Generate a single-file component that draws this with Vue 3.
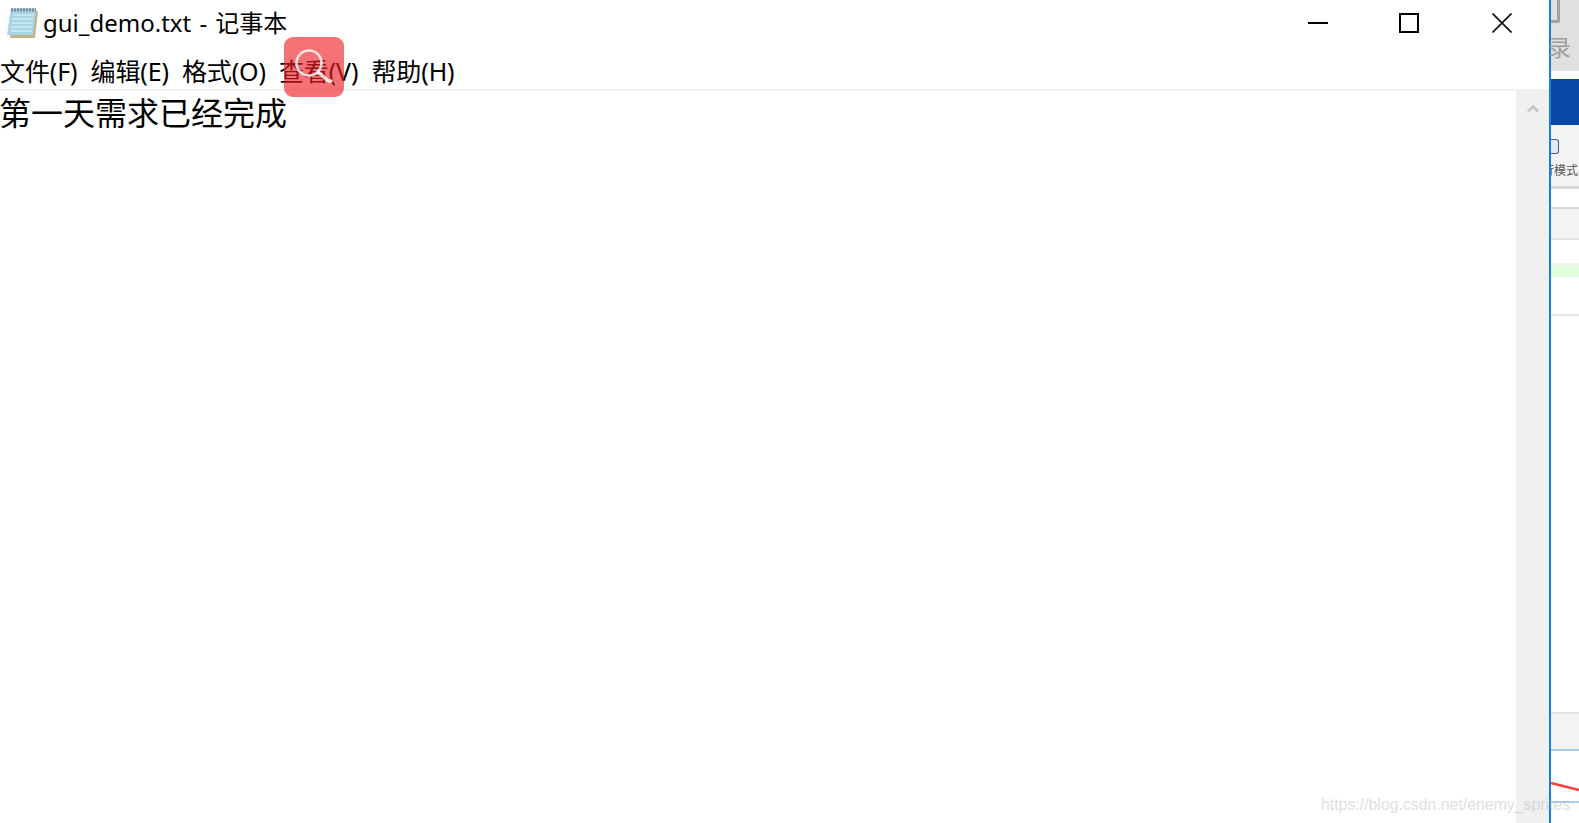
<script setup>
const menus = ['文件(F)', '编辑(E)', '格式(O)', '查看(V)', '帮助(H)'];
</script>

<template>
  <div class="screen">
    <div class="notepad">
      <div class="titlebar">
        <svg class="app-icon" viewBox="0 0 34 34" width="34" height="34">
          <path d="M8 5h24l-3 27H4z" fill="#c4b28a" />
          <path d="M5 2h25l-3 27H1z" fill="#a6d4e4" />
          <path d="M7 9h21M6 13h21M6 17h21M5 21h21M5 25h21" stroke="#cfeaf2" stroke-width="1.6" />
          <path d="M5 4h25" stroke="#7d8a90" stroke-width="3" stroke-dasharray="2 1" />
        </svg>
        <span class="title">gui_demo.txt - 记事本</span>
        <div class="controls">
          <svg class="ctl ctl-min" viewBox="0 0 20 20" width="20" height="20">
            <path d="M0 10h20" stroke="#000" stroke-width="2" />
          </svg>
          <svg class="ctl ctl-max" viewBox="0 0 20 20" width="20" height="20">
            <rect x="1" y="1" width="18" height="18" fill="none" stroke="#000" stroke-width="2" />
          </svg>
          <svg class="ctl ctl-close" viewBox="0 0 20 20" width="20" height="20">
            <path d="M0.5 0.5l19 19M19.5 0.5l-19 19" stroke="#111" stroke-width="1.7" />
          </svg>
        </div>
      </div>
      <div class="menubar">
        <span v-for="m in menus" :key="m" class="menu-item">{{ m }}</span>
      </div>
      <div class="content">
        <div class="editor">第一天需求已经完成</div>
        <div class="scrollbar">
          <svg viewBox="0 0 12 10" width="12" height="10">
            <path d="M1 8.5l5-5 5 5" fill="none" stroke="#c6c6c6" stroke-width="3" />
          </svg>
        </div>
      </div>
    </div>

    <div class="behind">
      <div class="b-head">
        <div class="b-glyph"></div>
        <span class="b-char">录</span>
      </div>
      <div class="b-gap"></div>
      <div class="b-blue"></div>
      <div class="b-tools">
        <div class="b-check"></div>
        <span class="b-label">行模式</span>
      </div>
      <div class="b-row b-row-a"></div>
      <div class="b-row b-row-b"></div>
      <div class="b-row b-row-c"></div>
      <div class="b-green"></div>
      <div class="b-row b-row-d"></div>
      <div class="b-spacer"></div>
      <div class="b-foot"></div>
      <div class="b-chart">
        <svg viewBox="0 0 28 50" width="28" height="50" preserveAspectRatio="none">
          <path d="M0 32L28 39" stroke="#ff3b3b" stroke-width="2.4" />
        </svg>
      </div>
      <div class="b-rest"></div>
    </div>

    <!-- floating search button -->
    <div class="search-badge">
      <svg viewBox="0 0 60 60" width="60" height="60">
        <circle cx="25" cy="26" r="12.5" fill="none" stroke="#fff" stroke-opacity="0.8" stroke-width="2.6" />
        <path d="M34 35l8 7q3 3 5 2" fill="none" stroke="#fff" stroke-opacity="0.8" stroke-width="3.4" stroke-linecap="round" />
      </svg>
    </div>
    <div class="watermark">https://blog.csdn.net/enemy_sprites</div>
  </div>
</template>

<style>
html,
body {
  margin: 0;
  background: #fff;
  overflow: hidden;
}
</style>

<style scoped>
.screen {
  position: relative;
  display: flex;
  width: 1579px;
  height: 823px;
  overflow: hidden;
  font-family: "Noto Sans", "Noto Sans CJK SC", sans-serif;
  color: #000;
}
.notepad {
  display: flex;
  flex-direction: column;
  width: 1549px;
  background: #fff;
  border-right: 2px solid #1580d8;
}
.titlebar {
  display: flex;
  align-items: center;
  height: 46px;
  padding-left: 6px;
}
.app-icon {
  flex-shrink: 0;
}
.title {
  margin-left: 3px;
  font-size: 24px;
  line-height: 44px;
  word-spacing: 2px;
  white-space: nowrap;
}
.controls {
  display: flex;
  align-items: center;
  margin-left: auto;
  padding-right: 37px;
}
.ctl {
  display: block;
}
.ctl-max {
  margin-left: 71px;
}
.ctl-close {
  margin-left: 73px;
}
.menubar {
  display: flex;
  gap: 13px;
  height: 45px;
  padding-top: 5px;
  align-items: center;
  border-bottom: 2px solid #f0f0f0;
  box-sizing: border-box;
  font-size: 25px;
  letter-spacing: -0.1px;
}
.menu-item {
  white-space: nowrap;
}
.content {
  flex: 1;
  display: flex;
  min-height: 0;
}
.editor {
  flex: 1;
  font-size: 32px;
  line-height: 44px;
  text-indent: -1px;
}
.scrollbar {
  display: flex;
  justify-content: center;
  width: 33px;
  padding-top: 12px;
  box-sizing: border-box;
  background: #f0f0f0;
}
.scrollbar svg {
  display: block;
}
.behind {
  display: flex;
  flex-direction: column;
  flex: 1;
  min-width: 0;
  background: #fff;
}
.b-head {
  height: 71px;
  background: #e0e0e0;
}
.b-glyph {
  width: 9px;
  height: 23px;
  box-sizing: border-box;
  border-right: 3px solid #a3a3a3;
  border-bottom: 3px solid #a3a3a3;
  border-bottom-right-radius: 3px;
}
.b-char {
  display: block;
  margin: 11px 0 0 -3px;
  font-size: 23px;
  line-height: 26px;
  color: #a0a0a0;
}
.b-gap {
  height: 8px;
}
.b-blue {
  height: 46px;
  background: #0848a4;
}
.b-tools {
  height: 61px;
  background: #f3f3f3;
  overflow: hidden;
}
.b-check {
  width: 8px;
  height: 15px;
  margin-top: 14px;
  box-sizing: border-box;
  border: 1px solid #4a5a85;
  border-left: 0;
  border-radius: 0 3px 3px 0;
  background: #e4e9f3;
}
.b-label {
  display: block;
  margin: 9px 0 0 -9px;
  font-size: 12px;
  line-height: 16px;
  color: #555;
  white-space: nowrap;
}
.b-row {
  box-sizing: border-box;
}
.b-row-a {
  height: 21px;
  border-top: 3px solid #d8d8d8;
}
.b-row-b {
  height: 33px;
  background: #f3f3f3;
  border-top: 2px solid #d8d8d8;
  border-bottom: 2px solid #e2e2e2;
}
.b-row-c {
  height: 25px;
  border-bottom: 2px solid #f2f2f2;
}
.b-green {
  height: 12px;
  background: #e0ffdf;
}
.b-row-d {
  height: 39px;
  border-bottom: 2px solid #e6e6e6;
}
.b-spacer {
  height: 396px;
}
.b-foot {
  height: 35px;
  background: #f3f3f3;
  border-top: 2px solid #e2e2e2;
  border-bottom: 2px solid #a9cdf0;
}
.b-chart {
  height: 50px;
}
.b-chart svg {
  display: block;
}
.b-rest {
  flex: 1;
  border-top: 2px solid #a9cdf0;
}
.search-badge {
  position: absolute;
  left: 284px;
  top: 37px;
  width: 60px;
  height: 60px;
  border-radius: 9px;
  background: rgba(238, 30, 38, 0.63);
}
.search-badge svg {
  display: block;
}
.watermark {
  position: absolute;
  left: 1321px;
  top: 795px;
  font-family: "Liberation Sans", sans-serif;
  font-size: 15.85px;
  line-height: 20px;
  color: rgba(190, 190, 190, 0.5);
  white-space: nowrap;
}
</style>
